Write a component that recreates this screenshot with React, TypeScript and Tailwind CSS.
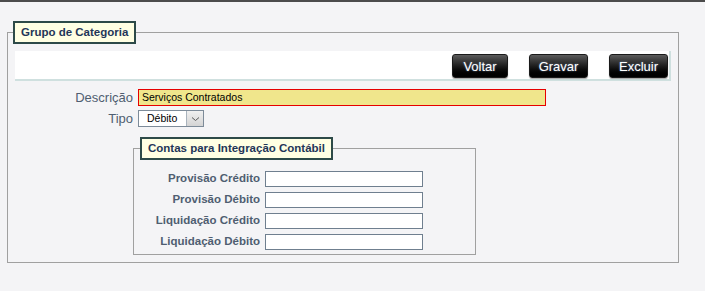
import React from 'react';

const labelCls = "text-right text-[13px] leading-none text-[#4f5e71] font-['Liberation_Sans',Arial,sans-serif]";
const subLabelCls = 'w-[126px] text-right text-[11.5px] font-bold leading-none text-[#4f5e71]';
const legendCls = 'border-2 border-[#2d4a48] bg-[#ffffe3] px-[6px] h-[23px] text-[11.5px] font-bold leading-[19px] text-[#1f3658]';

function Btn({ children, w }: { children: React.ReactNode; w: string }) {
  return (
    <button
      type="button"
      className={`${w} h-[24px] rounded-[3px] border border-[#1a1a1a] bg-gradient-to-b from-[#5c5c5c] via-[#1e1e1e] to-[#000] text-[13px] leading-none text-white shadow-[0_1px_1px_rgba(0,0,0,0.35)] [text-shadow:0_0_2px_rgba(170,200,255,0.6)]`}
    >
      {children}
    </button>
  );
}

const CONTAS = ['Provisão Crédito', 'Provisão Débito', 'Liquidação Crédito', 'Liquidação Débito'];

export default function App() {
  return (
    <div className="min-h-[291px] border-t-2 border-[#4c4c4c] bg-[#f4f4f6] font-['Liberation_Sans',Arial,sans-serif]">
      <div className="pt-[19px] pl-[7px]">
        <fieldset className="w-[672px] border border-[#a0a0a0]">
          <legend className={`ml-[5px] ${legendCls}`}>Grupo de Categoria</legend>
          <div className="px-[7px] pb-[7px]">
            {/* barra de botoes */}
            <div className="mt-[7px] flex h-[30px] items-start justify-end gap-[21px] border-r-2 border-b-2 border-[#cfe0df] bg-white pt-[3px] pr-[1px]">
              <Btn w="w-[56px]">Voltar</Btn>
              <Btn w="w-[59px]">Gravar</Btn>
              <Btn w="w-[59px]">Excluir</Btn>
            </div>

            <div className="mt-[8px] flex items-center gap-[5px]">
              <span className={`w-[118px] ${labelCls}`}>Descrição</span>
              <div className="flex h-[17px] w-[408px] items-center border border-[#e60000] bg-[#f0e68c] pl-[3px] text-[10.5px] text-black">
                Serviços Contratados
              </div>
            </div>

            <div className="mt-[4px] flex items-center gap-[5px]">
              <span className={`w-[118px] ${labelCls}`}>Tipo</span>
              <div className="flex h-[17px] w-[66px] border border-[#7d8b99] bg-white">
                <span className="flex flex-1 items-center pl-[8px] text-[10.5px] text-black">Débito</span>
                <span className="flex w-[17px] items-center justify-center border-l border-[#a9b3bd] bg-gradient-to-b from-[#f0f0f0] to-[#d4d4d4]">
                  <svg width="9" height="6" viewBox="0 0 9 6">
                    <path d="M1 1.5 L4.5 4.5 L8 1.5" fill="none" stroke="#5a5a5a" strokeWidth="1" />
                  </svg>
                </span>
              </div>
            </div>

            <fieldset className="mt-[10px] ml-[118px] w-[343px] border border-[#a0a0a0]">
              <legend className={`ml-[6px] ${legendCls}`}>Contas para Integração Contábil</legend>
              <div className="mt-[11px] flex flex-col gap-[5px] pb-[4px]">
                {CONTAS.map(c => (
                  <div key={c} className="flex items-center gap-[5px]">
                    <span className={subLabelCls}>{c}</span>
                    <div className="h-[16px] w-[158px] border border-[#6f7f8f] bg-white" />
                  </div>
                ))}
              </div>
            </fieldset>
          </div>
        </fieldset>
      </div>
    </div>
  );
}
